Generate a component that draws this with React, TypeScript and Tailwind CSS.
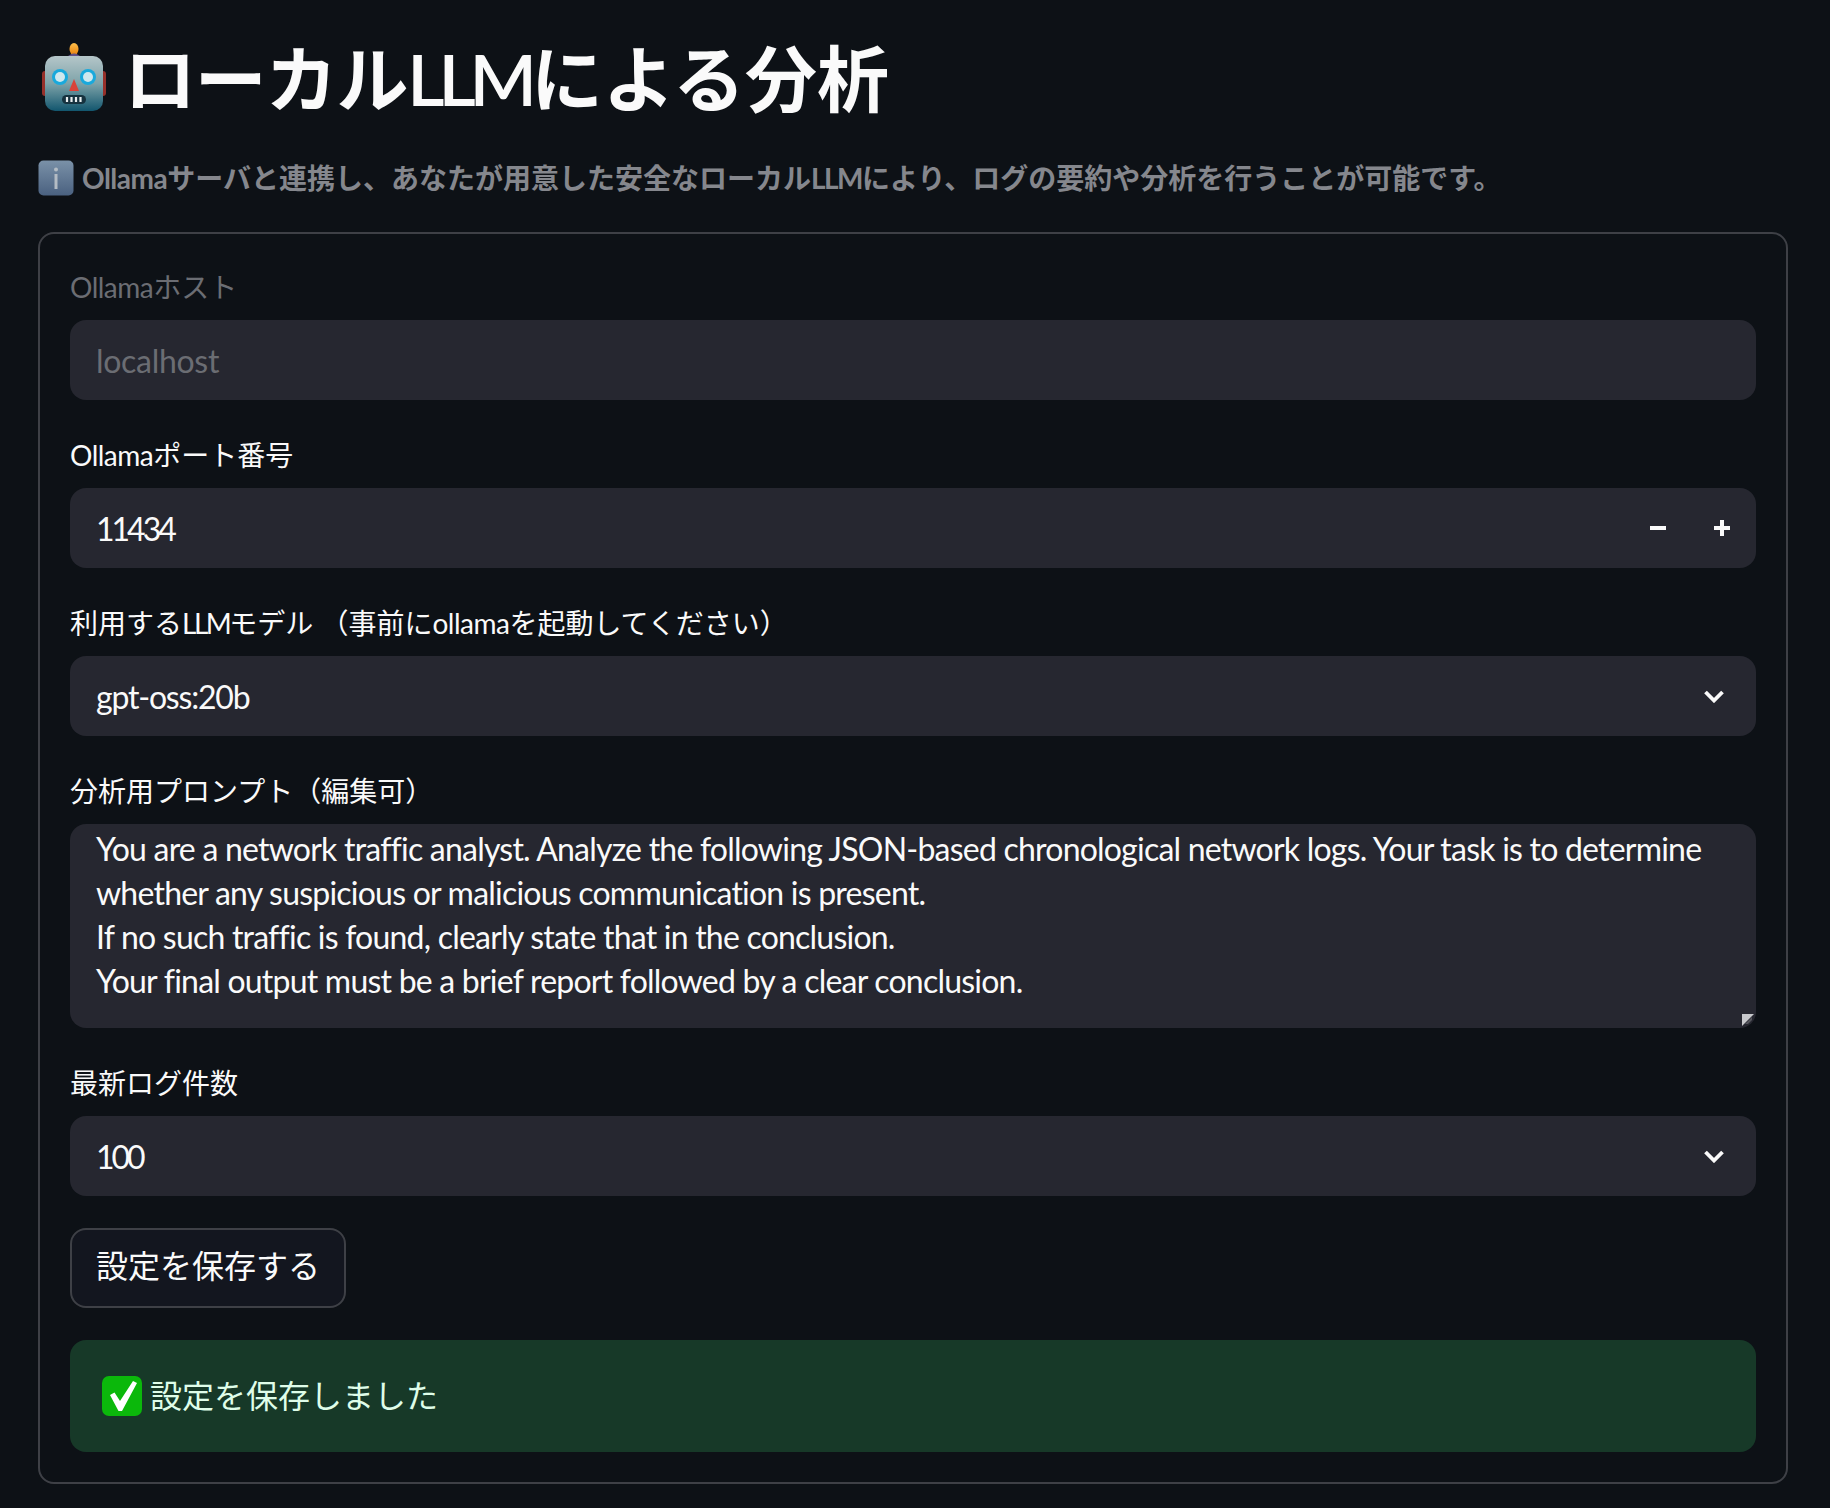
const prompt = `You are a network traffic analyst. Analyze the following JSON-based chronological network logs. Your task is to determine whether any suspicious or malicious communication is present.
If no such traffic is found, clearly state that in the conclusion.
Your final output must be a brief report followed by a clear conclusion.`;

const font = "font-['Lato','Noto_Sans_CJK_JP',sans-serif]";

function RobotIcon() {
  return (
    <svg width="72" height="72" viewBox="0 0 72 72" className="shrink-0">
      <defs>
        <linearGradient id="head" x1="0" y1="0" x2="0" y2="1">
          <stop offset="0" stopColor="#b5c6c9" />
          <stop offset="0.5" stopColor="#7ea3a9" />
          <stop offset="1" stopColor="#12566e" />
        </linearGradient>
        <linearGradient id="bulb" x1="0" y1="0" x2="0" y2="1">
          <stop offset="0" stopColor="#ffc04a" />
          <stop offset="1" stopColor="#e8810f" />
        </linearGradient>
      </defs>
      <rect x="4" y="29" width="6" height="25" rx="3" fill="#96302a" />
      <rect x="62" y="29" width="6" height="25" rx="3" fill="#96302a" />
      <ellipse cx="36" cy="7" rx="4.5" ry="6" fill="url(#bulb)" />
      <path d="M28 16 Q36 7 44 16 Z" fill="#5f5088" />
      <rect x="7" y="14" width="58" height="55" rx="10" fill="url(#head)" />
      <circle cx="22" cy="35" r="8" fill="#19a9dc" />
      <circle cx="22" cy="35" r="5" fill="#cfe8ee" />
      <circle cx="50" cy="35" r="8" fill="#19a9dc" />
      <circle cx="50" cy="35" r="5" fill="#cfe8ee" />
      <path d="M36 37 L41 49 L31 49 Z" fill="#d9433a" />
      <rect x="24" y="53" width="24" height="9" rx="4.5" fill="#16323f" />
      <path d="M29 55v5M33.500 55v5M38 55v5M42.500 55v5" stroke="#e8eef0" strokeWidth="2.200" />
    </svg>
  );
}

function InfoIcon() {
  return (
    <svg width="36" height="36" viewBox="0 0 36 36" className="shrink-0">
      <defs>
        <linearGradient id="info" x1="0" y1="0" x2="0" y2="1">
          <stop offset="0" stopColor="#7a91a8" />
          <stop offset="1" stopColor="#4a6180" />
        </linearGradient>
      </defs>
      <rect x="0.500" y="0.500" width="35" height="35" rx="5" fill="url(#info)" />
      <circle cx="18" cy="9.500" r="2" fill="#b4bcc4" />
      <rect x="16.500" y="14" width="3" height="15" fill="#b4bcc4" />
    </svg>
  );
}

function CheckIcon() {
  return (
    <svg width="40" height="40" viewBox="0 0 40 40" className="shrink-0">
      <rect width="40" height="40" rx="7" fill="#0bb80b" />
      <path d="M8 19 L12.500 16.500 L18 25 L31 5 L35 7 L20 35 L16.500 35 Z" fill="#ffffff" />
    </svg>
  );
}

function Chevron() {
  return (
    <svg width="20" height="13" viewBox="0 0 20 13" className="shrink-0">
      <path d="M1.500 2 L10 10.500 L18.500 2" fill="none" stroke="#fafafa" strokeWidth="3.800" />
    </svg>
  );
}

function Field({ label, muted, children }: { label: React.ReactNode; muted?: boolean; children: React.ReactNode }) {
  return (
    <div className="flex flex-col">
      <label className={`h-14 text-[28px] leading-[46px] ${muted ? "text-[#6b6d73]" : "text-[#fafafa]"}`}>
        {label}
      </label>
      {children}
    </div>
  );
}

function Select({ value, tracking }: { value: string; tracking: string }) {
  return (
    <div className="h-20 flex items-center justify-between pl-[26px] pr-8 rounded-2xl bg-[#262730] text-[32px] text-[#fafafa]">
      <span className={`pt-[2px] ${tracking}`}>{value}</span>
      <Chevron />
    </div>
  );
}

export default function App() {
  return (
    <div className={`${font} min-h-[1508px] bg-[#0d1116] pl-[38px] pr-[42px] pt-[42px]`}>
      <div className="flex items-center h-[72px] gap-[14px]">
        <RobotIcon />
        <h1 className="text-[72px] leading-none font-semibold text-[#fafafa]">
          <span className="tracking-[-1.200px]">ローカル</span>
          <span className="tracking-[-6px]">LLM</span>
          による分析
        </h1>
      </div>

      <div className="mt-[46px] flex items-center h-9 gap-2 text-[28px] font-bold text-[#85878d]">
        <InfoIcon />
        <p>
          <span className="tracking-[-0.5px]">Ollama</span>サーバと連携し、あなたが用意した安全なローカル
          <span className="tracking-[-1.500px]">LLM</span>
          により、ログの要約や分析を行うことが可能です。
        </p>
      </div>

      <div className="mt-[36px] flex flex-col gap-8 rounded-2xl border-2 border-[#3e4046] px-[30px] pt-[30px] pb-[30px]">
        <Field label={<><span className="tracking-[-0.5px]">Ollama</span>ホスト</>} muted>
          <input
            disabled
            value="localhost"
            className="h-20 w-full px-[26px] rounded-2xl bg-[#262730] text-[32px] tracking-[-0.3px] text-[#6b6d73] outline-none"
          />
        </Field>

        <Field label={<><span className="tracking-[-0.5px]">Ollama</span>ポート番号</>}>
          <div className="h-20 flex items-center rounded-2xl bg-[#262730] pl-[26px] pr-[2px] text-[32px] text-[#fafafa]">
            <span className="flex-1 pt-[2px] tracking-[-3px]">11434</span>
            <button className="w-16 h-full flex items-center justify-center">
              <svg width="16" height="4" viewBox="0 0 16 4"><rect width="16" height="4" fill="#fafafa" /></svg>
            </button>
            <button className="w-16 h-full flex items-center justify-center">
              <svg width="16" height="16" viewBox="0 0 16 16"><path d="M0 6h6V0h4v6h6v4h-6v6H6v-6H0z" fill="#fafafa" /></svg>
            </button>
          </div>
        </Field>

        <Field label={<>利用する<span className="tracking-[-2.500px]">LLM</span>モデル （事前に<span className="tracking-[-0.5px]">ollama</span>を起動してください）</>}>
          <Select value="gpt-oss:20b" tracking="tracking-[-1.200px]" />
        </Field>

        <Field label="分析用プロンプト（編集可）">
          <div className="relative">
            <textarea
              readOnly
              value={prompt}
              className="block h-[204px] w-full resize-none rounded-2xl bg-[#262730] px-[26px] pt-[3px] text-[32px] leading-[44px] tracking-[-0.780px] text-[#fafafa] outline-none"
            />
            {/* corner resize handle */}
            <svg width="14" height="14" viewBox="0 0 14 14" className="absolute right-[1px] bottom-[1px]">
              <path d="M1 1h12L1 13z" fill="#c8c9cc" />
              <path d="M4 11L11 4v3l-4 4z" fill="#55565c" />
            </svg>
          </div>
        </Field>

        <Field label="最新ログ件数">
          <Select value="100" tracking="tracking-[-3px]" />
        </Field>

        <button className="h-20 w-[276px] rounded-2xl border-2 border-[#3e4046] bg-[#13161f] pb-1 text-[32px] text-[#fafafa]">
          設定を保存する
        </button>

        <div className="h-28 flex items-center gap-2 rounded-2xl bg-[#173928] px-8 text-[32px] text-[#dffde9]">
          <CheckIcon />
          <span>設定を保存しました</span>
        </div>
      </div>
    </div>
  );
}
